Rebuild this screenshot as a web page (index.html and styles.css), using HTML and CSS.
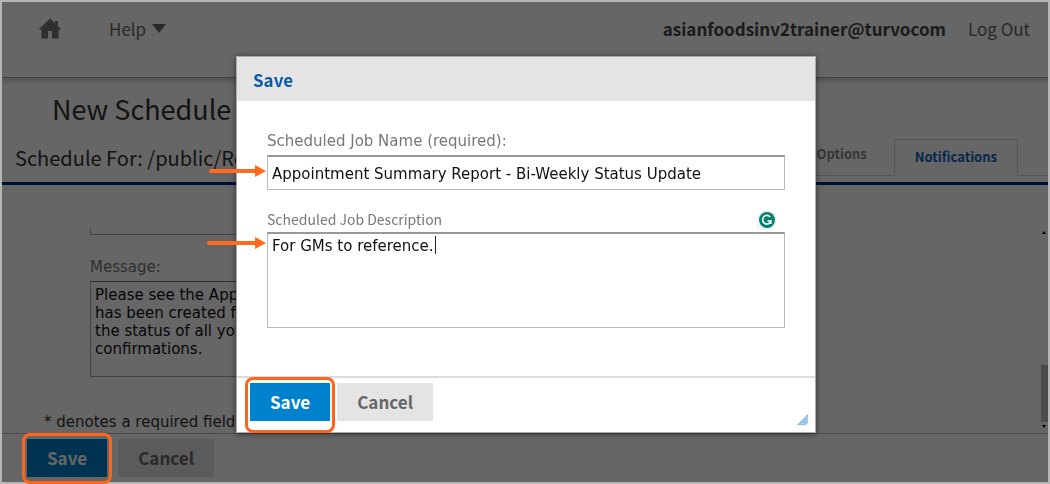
FILE: index.html
```html
<!DOCTYPE html>
<html lang="en">
<head>
<meta charset="utf-8">
<meta name="viewport" content="width=device-width, initial-scale=1">
<title>New Schedule</title>
<link rel="stylesheet" href="styles.css">
</head>
<body>
<div class="app">
  <header class="topbar">
    <a class="home" href="#" aria-label="Home">
      <svg width="24" height="22" viewBox="0 0 24 22" aria-hidden="true"><path d="M12 0.500 L0.500 11.500 H3.500 V20.500 H10 V13 H14 V20.500 H20.500 V11.500 H23.500 L20 8.200 V3 H17 V5.300 Z" fill="currentColor"/></svg>
    </a>
    <button class="help" type="button">Help
      <svg width="14" height="9" viewBox="0 0 14 9" aria-hidden="true"><path d="M0 0H14L7 9Z" fill="currentColor"/></svg>
    </button>
    <span class="user">asianfoodsinv2trainer@turvocom</span>
    <a class="logout" href="#">Log Out</a>
  </header>
  <h1 class="title">New Schedule</h1>
  <div class="subhead">
    <h2 class="subtitle">Schedule For: /public/Reports</h2>
    <nav class="tabs">
      <a class="tab" href="#">Output Options</a>
      <a class="tab tab-active" href="#">Notifications</a>
      <span class="tab-rest"></span>
    </nav>
  </div>
  <main class="content">
    <form class="form">
      <div class="prev-field"></div>
      <label class="msg-label" for="message">Message:</label>
      <textarea class="message" id="message">Please see the Appointment report
has been created for you to see
the status of all your order
confirmations.</textarea>
      <p class="note">* denotes a required field.</p>
    </form>
    <div class="scroll">
      <svg width="6" height="6" viewBox="0 0 6 6" aria-hidden="true"><path d="M1 4L3 1L5 4Z"/></svg>
      <span class="thumb"></span>
      <svg width="6" height="6" viewBox="0 0 6 6" aria-hidden="true"><path d="M1 1L3 4L5 1Z"/></svg>
    </div>
  </main>
  <footer class="actions">
    <span class="callout"><button class="btn btn-primary" type="button">Save</button></span>
    <button class="btn" type="button">Cancel</button>
  </footer>
</div>
<div class="backdrop"></div>
<div class="layer">
  <section class="modal" role="dialog" aria-labelledby="modal-title">
    <h2 class="modal-title" id="modal-title">Save</h2>
    <div class="modal-body">
      <label class="name-label" for="job-name">Scheduled Job Name (required):</label>
      <div class="field">
        <input class="name" id="job-name" type="text" value="Appointment Summary Report - Bi-Weekly Status Update">
        <svg class="arrow" width="60" height="12" viewBox="0 0 60 12" aria-hidden="true"><path d="M4 6H50" stroke="#ff6a1f" stroke-width="4" stroke-linecap="round"/><path d="M48 0L59 6L48 12Z" fill="#ff6a1f"/></svg>
      </div>
      <div class="desc-head">
        <label class="desc-label" for="job-desc">Scheduled Job Description</label>
        <svg class="checker" width="20" height="20" viewBox="0 0 20 20" aria-hidden="true"><path d="M1 19V10A9 9 0 1 1 10 19Z" fill="#fff" stroke="#e4e4e4"/><circle cx="10" cy="10" r="8" fill="#04816f"/><path d="M13.200 6.900A4.300 4.300 0 1 0 14 11H10.500M13.800 14V11" fill="none" stroke="#fff" stroke-width="1.600"/></svg>
      </div>
      <div class="field">
        <textarea class="desc" id="job-desc">For GMs to reference.</textarea>
        <span class="caret-line" aria-hidden="true"></span>
        <svg class="arrow arrow-first-line" width="60" height="12" viewBox="0 0 60 12" aria-hidden="true"><path d="M2 6H50" stroke="#ff6a1f" stroke-width="4" stroke-linecap="round"/><path d="M48 0L59 6L48 12Z" fill="#ff6a1f"/></svg>
      </div>
    </div>
    <div class="modal-actions">
      <span class="callout"><button class="btn btn-primary" type="button">Save</button></span>
      <button class="btn" type="button">Cancel</button>
      <svg class="grip" width="12" height="12" viewBox="0 0 12 12" aria-hidden="true"><path d="M0 11L11 0V9L9 11Z" fill="#b5d5f1"/><path d="M1 11L11 1M4 11L11 4M7 11L11 7" stroke="#7fb5e6" stroke-width="1.500" stroke-dasharray="2 1"/></svg>
    </div>
  </section>
</div>
</body>
</html>
```
FILE: styles.css
```css
* { box-sizing: border-box; }

body {
  margin: 0;
  font-family: "Noto Sans CJK SC", "Noto Sans", sans-serif;
  color: #333;
  background: #fff;
}

h1, h2, p { margin: 0; font-weight: 400; }
a { color: inherit; text-decoration: none; }
button, input, textarea { font: inherit; color: inherit; }

.app {
  display: flex;
  flex-direction: column;
  height: 100vh;
  padding: 2px 2px 1px;
}

.topbar {
  display: flex;
  align-items: center;
  flex: none;
  height: 76px;
  padding: 0 18px 22px 36px;
  font-size: 17px;
  line-height: 28px;
  color: #666;
  border-bottom: 1px solid #aaa;
  box-shadow: 0 3px 4px #ccc;
}
.home { display: flex; color: #777; }
.help {
  display: flex;
  align-items: center;
  gap: 6px;
  margin-left: 47px;
  padding: 0;
  border: 0;
  background: none;
}
.user { margin-left: auto; font-weight: 700; color: #444; }
.logout { margin-left: 22px; }

.title { flex: none; padding: 11px 50px 0; font-size: 27px; line-height: 40px; }

.subhead {
  display: flex;
  flex: none;
  height: 56px;
  padding-left: 13px;
  border-bottom: 3px solid #002a80;
}
.subtitle { flex: 1; padding-top: 15px; font-size: 20px; line-height: 28px; }
.tabs { display: flex; height: 47px; padding-top: 10px; font-size: 13px; font-weight: 700; }
.tab { padding: 3px 27px 0 0; line-height: 24px; color: #888; border-bottom: 1px solid #d4d4d4; }
.tab-active {
  padding: 5px 20px;
  color: #0a66bb;
  border: 1px solid #d4d4d4;
  border-bottom: 0;
}
.tab-rest { width: 30px; border-bottom: 1px solid #d4d4d4; }

.content { display: flex; flex: 1; min-height: 0; overflow: hidden; font-family: "DejaVu Sans", sans-serif; font-size: 15px; }
.form { display: flex; flex-direction: column; width: 660px; padding: 44px 0 0 42px; }
.prev-field { flex: none; height: 6px; margin-left: 46px; border: 1px solid #aaa; border-top: 0; }
.msg-label { margin: 22px 0 4px 46px; line-height: 20px; color: #777; }
.message {
  display: block;
  flex: none;
  height: 96px;
  margin-left: 46px;
  padding: 4px;
  border: 1px solid #aaa;
  border-top-color: #777;
  outline: 0;
  resize: none;
  overflow: hidden;
  line-height: 18px;
  color: #111;
  background: none;
}
.note { margin-top: 35px; line-height: 20px; }
.scroll { display: flex; flex-direction: column; gap: 2px; width: 8px; margin-left: auto; padding: 45px 1px 3px; }
.thumb { width: 7px; height: 57px; margin-top: auto; background: #bbb; }

.actions {
  display: flex;
  flex: none;
  gap: 11px;
  height: 50px;
  padding: 5px 25px;
  border-top: 1px solid #bbb;
}
.btn {
  display: block;
  height: 38px;
  padding: 0 20px;
  border: 0;
  font-size: 17px;
  line-height: 38px;
  font-weight: 700;
  color: #666;
  background: #e4e4e4;
}
.btn-primary { color: #fff; background: #0081ce; }
.callout { position: relative; }
.callout::after {
  content: "";
  position: absolute;
  z-index: 2;
  inset: -6px -5px;
  border: 3px solid #ff651a;
  border-radius: 8px;
}

.backdrop {
  position: fixed;
  inset: 0;
  z-index: 1;
  border: 2px solid #b5b7b6;
  background: rgba(0, 0, 0, .6);
  background-clip: padding-box;
}

.layer {
  position: fixed;
  inset: 0;
  z-index: 3;
  display: flex;
  justify-content: center;
  align-items: flex-start;
  padding: 56px 16px 16px 18px;
  pointer-events: none;
}
.modal {
  width: 580px;
  border: 1px solid #aaa;
  background: #fff;
  box-shadow: 0 1px 6px rgba(0, 0, 0, .5);
  pointer-events: auto;
}
.modal-title { padding: 9px 16px 7px; font-size: 17px; line-height: 28px; font-weight: 700; color: #0a5cab; background: #e4e4e4; }
.modal-body { padding: 30px 30px 48px; font-family: "DejaVu Sans", sans-serif; font-size: 15px; }
.name-label { display: block; margin-bottom: 4px; line-height: 20px; color: #777; }
.field { position: relative; }
.name, .desc {
  display: block;
  width: 100%;
  padding: 0 4px;
  border: 1px solid #bbb;
  border-top: 2px solid #999;
  border-radius: 0;
  outline: 0;
  color: #111;
  background: #fff;
}
.name { height: 35px; padding-top: 2px; }
.desc { height: 96px; padding-top: 2px; line-height: 20px; resize: none; }
.desc-head { display: flex; align-items: center; justify-content: space-between; height: 42px; padding: 18px 8px 2px 0; }
.desc-label { font-family: "Noto Sans CJK SC", "Noto Sans", sans-serif; font-size: 14px; line-height: 20px; color: #777; }
.checker { margin-top: 2px; }
.caret-line { position: absolute; top: 4px; left: 168px; width: 1px; height: 18px; background: #222; pointer-events: none; }
.arrow { position: absolute; right: 100%; top: 10px; }
.arrow-first-line { top: 5px; }

.modal-actions {
  position: relative;
  display: flex;
  gap: 7px;
  height: 56px;
  padding: 5px 13px;
  border-top: 2px solid #ddd;
}
.grip { position: absolute; right: 6px; bottom: 6px; }
```
